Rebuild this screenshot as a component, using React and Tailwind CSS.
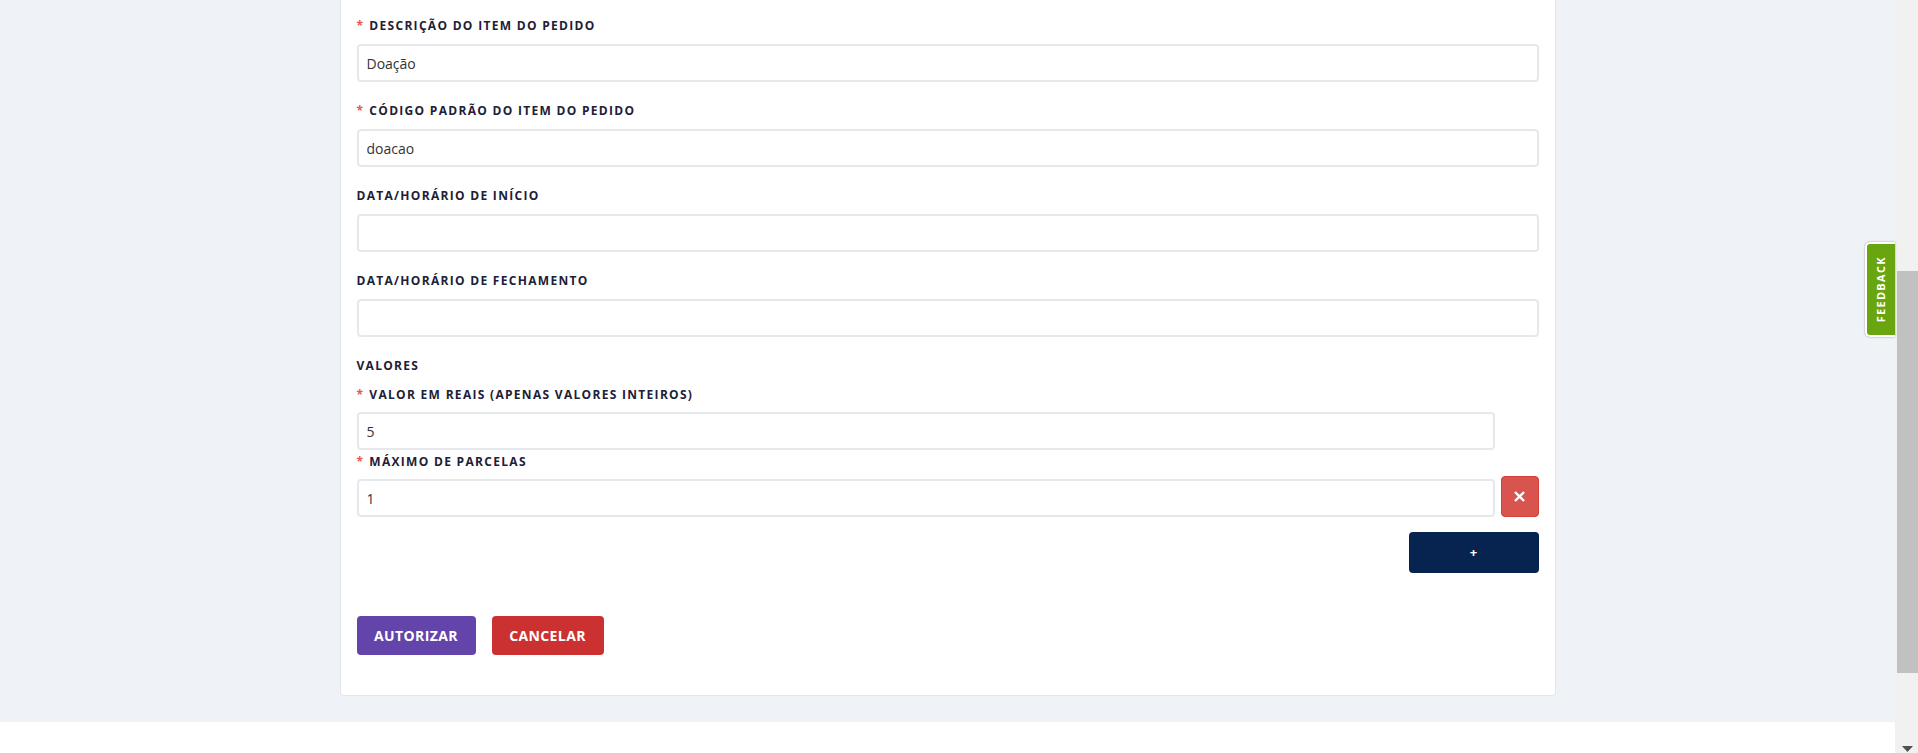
import React from 'react';

function Label({ required, children }) {
  return (
    <div className="flex h-5 items-center pt-[3px] text-[12px] font-bold uppercase tracking-[1.3px] text-[#1d2036]">
      {required && <span className="mr-[5px] text-[#e8574f]">*</span>}
      {children}
    </div>
  );
}

function TextInput({ value, className = 'mt-[10px]' }) {
  return (
    <input
      readOnly
      value={value}
      className={`${className} block h-[38px] w-full rounded-[4px] border-2 border-[#e5e9ee] bg-white px-[8px] text-[14px] text-[#333333] outline-none`}
    />
  );
}

function Field({ label, value, required }) {
  return (
    <div className="mb-[17px]">
      <Label required={required}>{label}</Label>
      <TextInput value={value} />
    </div>
  );
}

function App() {
  return (
    <div className="flex h-screen w-full overflow-hidden bg-white font-['Open_Sans',sans-serif]">
      <div className="relative flex flex-1 flex-col">
        <main className="flex-1 bg-[#eff2f6] pb-[26px]">
          <div className="mx-auto w-[1216px] rounded-b-[4px] border border-t-0 border-[#e3e7ec] bg-white px-4 pt-[14px] pb-[40px]">
            <Field required label="Descrição do item do pedido" value="Doação" />
            <Field required label="Código padrão do item do pedido" value="doacao" />
            <Field label="Data/Horário de início" value="" />
            <Field label="Data/Horário de fechamento" value="" />

            {/* Valores */}
            <div className="mb-[9px]">
              <Label>Valores</Label>
            </div>
            <div className="flex items-end gap-[6px]">
              <div className="flex-1">
                <Label required>Valor em reais (apenas valores inteiros)</Label>
                <TextInput value="5" className="mt-[9px]" />
                <Label required>Máximo de parcelas</Label>
                <TextInput value="1" className="mt-[9px]" />
              </div>
              <button className="flex h-[41px] w-[38px] items-center justify-center rounded-[4px] border border-[#d43f3a] bg-[#d9534f] text-white">
                <svg className="h-[11px] w-[11px]" viewBox="0 0 12 12" fill="none" stroke="currentColor" strokeWidth={2.6} strokeLinecap="square">
                  <path d="M2 2l8 8M10 2l-8 8" />
                </svg>
              </button>
            </div>

            <div className="mt-[15px] flex justify-end">
              <button className="flex h-[41px] w-[130px] items-center justify-center rounded-[4px] bg-[#07234f] text-[13px] font-bold text-white">
                +
              </button>
            </div>

            <div className="mt-[43px] flex gap-4">
              <button className="h-[39px] w-[119px] rounded-[4px] bg-[#6244ab] text-[14px] font-bold tracking-[0.4px] text-white">
                AUTORIZAR
              </button>
              <button className="h-[39px] w-[112px] rounded-[4px] bg-[#cc3132] text-[14px] font-bold tracking-[0.4px] text-white">
                CANCELAR
              </button>
            </div>
          </div>
        </main>
        <footer className="h-[34px] bg-white" />

        {/* Feedback tab */}
        <div className="absolute right-0 top-[242px] flex h-[95px] w-[30px] items-center justify-center rounded-l-[5px] border-2 border-r-0 border-white bg-[#69a50f] shadow-[0_0_2px_rgba(0,0,0,0.4)]">
          <span className="-rotate-90 whitespace-nowrap text-[11px] font-bold tracking-[1.3px] text-white">
            FEEDBACK
          </span>
        </div>
      </div>

      {/* Scrollbar */}
      <div className="flex w-[23px] flex-col bg-[#f1f1f1] pl-[2px]">
        <div className="h-[271px]" />
        <div className="h-[402px] bg-[#c1c1c1]" />
        <div className="flex flex-1 items-end justify-center pb-[1px]">
          <svg className="h-[6px] w-[11px]" viewBox="0 0 11 6" fill="#505050">
            <path d="M0 0h11L5.5 6z" />
          </svg>
        </div>
      </div>
    </div>
  );
}

export default App;
